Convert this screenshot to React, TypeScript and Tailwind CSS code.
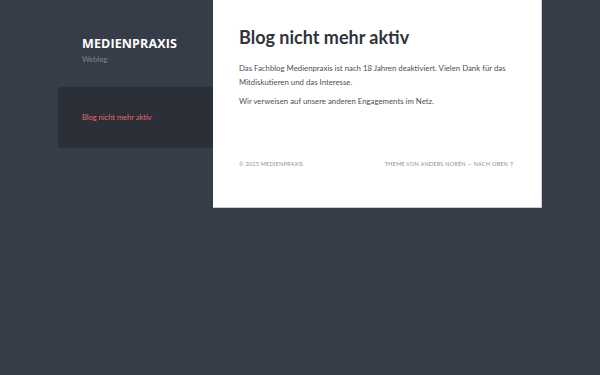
export default function App() {
  return (
    <div className="min-h-[375px] w-full bg-[#373d48] font-['Lato','Noto_Sans',sans-serif]">
      <div className="flex items-start">
        <aside className="ml-[58px] w-[155px] shrink-0">
          <div className="pl-[24px] pt-[36px]">
            <h1 className="font-['Open_Sans','Lato',sans-serif] text-[12.5px] font-bold leading-[16px] tracking-[0.01em] text-white">
              MEDIENPRAXIS
            </h1>
            <p className="mt-[3px] text-[7.5px] leading-[10px] text-[#7e848e]">Weblog</p>
          </div>
          <nav className="mt-[22px] h-[61px] rounded-l-[3px] bg-[#2a2f38] pl-[24px] pt-[26px]">
            <a className="block text-[7.5px] leading-[10px] text-[#e36a6a]">Blog nicht mehr aktiv</a>
          </nav>
        </aside>
        <main className="h-[208px] w-[329px] shrink-0 border-b border-r border-[#c9ccd1] bg-white px-[26px]">
          <h2 className="pt-[26px] text-[18px] font-bold leading-[22px] text-[#2f343b]">
            Blog nicht mehr aktiv
          </h2>
          <div className="mt-[13px] text-[7.8px] leading-[14px] text-[#4b4f56]">
            <p>
              Das Fachblog Medienpraxis ist nach 18 Jahren deaktiviert. Vielen Dank für das
              Mitdiskutieren und das Interesse.
            </p>
            <p className="mt-[5px]">Wir verweisen auf unsere anderen Engagements im Netz.</p>
          </div>
          <footer className="mt-[52px] flex justify-between pr-[1px] text-[5.6px] uppercase leading-[8px] tracking-[0.03em] text-[#8d9096]">
            <span>© 2025 Medienpraxis</span>
            <span>Theme von Anders Norén — Nach oben ↑</span>
          </footer>
        </main>
      </div>
    </div>
  );
}
